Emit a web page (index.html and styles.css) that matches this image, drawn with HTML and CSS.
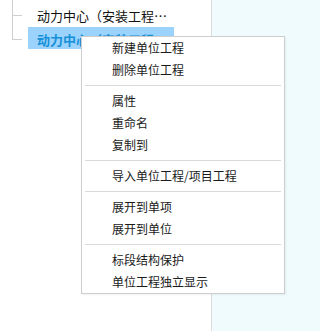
FILE: index.html
```html
<!DOCTYPE html>
<html lang="zh-CN">
<head>
<meta charset="utf-8">
<link rel="stylesheet" href="styles.css">
</head>
<body>
<div class="page">
  <div class="left">
    <div class="branch">
      <div class="row">
        <span class="conn"></span>
        <span class="label">动力中心（安装工程…</span>
      </div>
      <div class="row last">
        <span class="conn"></span>
        <span class="label selected">动力中心（安装工程…</span>
      </div>
    </div>
  </div>
  <div class="right"></div>
</div>
<div class="menu">
  <div class="item">新建单位工程</div>
  <div class="item">删除单位工程</div>
  <div class="sep"></div>
  <div class="item">属性</div>
  <div class="item">重命名</div>
  <div class="item">复制到</div>
  <div class="sep"></div>
  <div class="item">导入单位工程/项目工程</div>
  <div class="sep"></div>
  <div class="item">展开到单项</div>
  <div class="item">展开到单位</div>
  <div class="sep"></div>
  <div class="item">标段结构保护</div>
  <div class="item">单位工程独立显示</div>
</div>
</body>
</html>
```

FILE: styles.css
```css
html, body {
  margin: 0;
  padding: 0;
  height: 100%;
}
body {
  font-family: "Noto Sans CJK SC", "Noto Sans", sans-serif;
  color: #222;
  background: #fff;
  position: relative;
  overflow: hidden;
}
.page {
  display: flex;
  height: 331px;
}
.left {
  width: 211px;
  border-right: 1px solid #dcdcdc;
  background: #fff;
}
.right {
  flex: 1;
  background: #f0fbfd;
}
.branch {
  margin-left: 12px;
  padding-top: 4px;
  background: linear-gradient(#cfcfcf, #cfcfcf) left top / 1px 4px no-repeat;
}
.row {
  display: flex;
  height: 23px;
}
.row.last {
  height: 22px;
}
.conn {
  width: 10px;
  flex: none;
  background:
    linear-gradient(#cfcfcf, #cfcfcf) left top / 1px 100% no-repeat,
    linear-gradient(#cfcfcf, #cfcfcf) left 11px / 100% 1px no-repeat;
}
.row.last .conn {
  background:
    linear-gradient(#cfcfcf, #cfcfcf) left top / 1px 13px no-repeat,
    linear-gradient(#cfcfcf, #cfcfcf) left 12px / 100% 1px no-repeat;
}
.label {
  margin-left: 6px;
  width: 146px;
  box-sizing: border-box;
  padding-left: 9px;
  font-size: 13px;
  line-height: 23px;
  white-space: nowrap;
  overflow: hidden;
  color: #111;
}
.label.selected {
  background: #9bd3fc;
  color: #1690d8;
  font-weight: bold;
  padding-top: 3px;
  line-height: 19px;
}
.menu {
  position: absolute;
  left: 81px;
  top: 36px;
  width: 202px;
  background: #fff;
  border: 1px solid #cdcdcd;
  box-shadow: 1px 1px 2px rgba(0, 0, 0, 0.06);
}
.item {
  height: 22px;
  line-height: 22px;
  padding-left: 30px;
  font-size: 12px;
  color: #1a1a1a;
  white-space: nowrap;
}
.sep {
  height: 1px;
  margin: 4px 3px 4px 3px;
  background: #d9d9d9;
}
```
